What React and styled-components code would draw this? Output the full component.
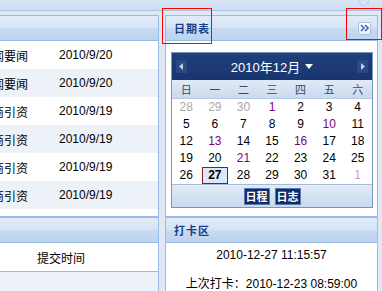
import React from 'react';
import styled, { createGlobalStyle } from 'styled-components';

const GlobalStyle = createGlobalStyle`
  body {
    margin: 0;
    background: #dfe8f6;
    font-family: "Liberation Sans", "Noto Sans CJK SC", sans-serif;
    font-size: 12px;
    color: #000;
  }
`;

const Page = styled.div`
  position: relative;
  width: 382px;
  height: 291px;
  overflow: hidden;
  background: #dfe8f6;
`;

const TopBar = styled.div`
  height: 10px;
  border-bottom: 1px solid #a9c6ea;
  background: linear-gradient(#d9e6f4, #cddef1);
`;

const Knob = styled.div`
  position: absolute;
  left: 358px;
  top: -5px;
  width: 9px;
  height: 9px;
  border-radius: 50%;
  border: 1px solid #b4cbe8;
  background: #d5e3f4;
`;

const Main = styled.div`
  display: flex;
  padding-top: 4px;
`;

const LeftCol = styled.div`
  display: flex;
  flex-direction: column;
  margin-left: -30px;
  width: 189px;
  flex-shrink: 0;
`;

const RightCol = styled.div`
  display: flex;
  flex-direction: column;
  margin-left: 6px;
  width: 213px;
  flex-shrink: 0;
`;

const Panel = styled.div`
  border: 1px solid #99bbe8;
  background: ${p => p.$bg || '#fff'};
  height: ${p => p.$h ? p.$h + 'px' : 'auto'};
  flex-shrink: 0;
`;

const Header = styled.div`
  display: flex;
  align-items: center;
  justify-content: space-between;
  height: 24px;
  padding: 0 6px 0 8px;
  border-bottom: 1px solid #99bbe8;
  background: linear-gradient(#e2ecf8, #d6e4f5 48%, #c9dbf1 52%, #bdd2ee);
`;

const Title = styled.span`
  font-family: "Noto Sans CJK SC", sans-serif;
  font-weight: bold;
  font-size: 11px;
  letter-spacing: 1px;
  color: #15428b;
`;

const ToolBtn = styled.div`
  display: flex;
  align-items: center;
  justify-content: center;
  width: 11px;
  height: 11px;
  border: 1px solid #a9bfdc;
  border-radius: 2px;
  background: linear-gradient(#ffffff, #e6eef8);
`;

const Row = styled.div`
  display: flex;
  align-items: center;
  height: 28px;
  background: ${p => (p.$alt ? '#edf2f8' : '#fff')};
`;

const TitleCell = styled.div`
  width: 79px;
  padding-left: 9px;
  font-family: "Noto Sans CJK SC", sans-serif;
  font-size: 12px;
  white-space: nowrap;
  overflow: hidden;
`;

const DateCell = styled.div`
  font-size: 12px;
`;

const HeadRow = styled.div`
  display: flex;
  align-items: center;
  height: 28px;
  border-bottom: 1px solid #99bbe8;
  background: #fff;
  padding-left: 66px;
  font-family: "Noto Sans CJK SC", sans-serif;
  font-size: 12px;
`;

const CalBody = styled.div`
  padding: 11px 4px 6px 5px;
`;

const Calendar = styled.div`
  border: 1px solid #7394c4;
  background: #fff;
`;

const CalHead = styled.div`
  display: flex;
  align-items: center;
  justify-content: space-between;
  height: 27px;
  padding: 0 4px;
  background: linear-gradient(#213f7c, #193570);
`;

const Arrow = styled.div`
  display: flex;
  align-items: center;
  justify-content: center;
  width: 11px;
  height: 13px;
  background: #2a4985;
`;

const Month = styled.div`
  display: flex;
  align-items: center;
  gap: 5px;
  color: #fff;
  font-family: "Liberation Sans", "Noto Sans CJK SC", sans-serif;
  font-size: 13px;
`;

const Grid = styled.div`
  display: grid;
  grid-template-columns: repeat(7, 1fr);
`;

const WeekRow = styled(Grid)`
  height: 18px;
  align-items: center;
  background: linear-gradient(#e1eaf6, #cbdaee);
  border-bottom: 1px solid #b5c9e6;
`;

const WeekDay = styled.div`
  text-align: center;
  font-family: "Noto Sans CJK SC", sans-serif;
  font-size: 11px;
  color: #3a4a66;
`;

const Day = styled.div`
  height: 17px;
  line-height: 17px;
  text-align: center;
  font-size: 12px;
  color: ${p => p.$color || '#000'};
  font-weight: ${p => (p.$today ? 'bold' : 'normal')};
  ${p =>
    p.$today &&
    `
    box-sizing: border-box;
    margin: 0 1px;
    border: 1px solid #8b1a1a;
    line-height: 15px;
    background: #dde7f5;
  `}
`;

const CalFoot = styled.div`
  display: flex;
  justify-content: center;
  align-items: center;
  gap: 5px;
  height: 22px;
  border-top: 1px solid #a3bbdd;
  background: linear-gradient(#e3ebf6, #c9d9ee);
`;

const FootBtn = styled.div`
  padding: 0 1px;
  height: 15px;
  line-height: 15px;
  background: #0d2c68;
  border: 1px solid #5b7bb0;
  color: #fff;
  font-family: "Noto Sans CJK SC", sans-serif;
  font-weight: bold;
  font-size: 11px;
`;

const ClockBody = styled.div`
  display: flex;
  flex-direction: column;
  align-items: center;
  gap: 15px;
  padding-top: 5px;
  font-size: 12px;
`;

const Line = styled.div`
  height: 14px;
  line-height: 14px;
  white-space: nowrap;
  font-family: "Liberation Sans", "Noto Sans CJK SC", sans-serif;
`;

const Mark = styled.div`
  position: absolute;
  left: ${p => p.$x}px;
  top: ${p => p.$y}px;
  width: ${p => p.$w}px;
  height: ${p => p.$h}px;
  border: 1px solid #ff0000;
`;

const news = [
  ['新闻要闻', '2010/9/20'],
  ['新闻要闻', '2010/9/20'],
  ['招商引资', '2010/9/19'],
  ['招商引资', '2010/9/19'],
  ['招商引资', '2010/9/19'],
  ['招商引资', '2010/9/19'],
];

const purple = '#800080';
const days = [
  [28, '#aaa'], [29, '#aaa'], [30, '#aaa'], [1, purple], [2], [3], [4],
  [5], [6], [7], [8], [9], [10, purple], [11],
  [12], [13, purple], [14], [15], [16, purple], [17], [18],
  [19], [20], [21, purple], [22], [23], [24], [25],
  [26], [27, null, true], [28], [29], [30], [31], [1, '#d49ac4'],
];

export default function App() {
  return (
    <Page>
      <GlobalStyle />
      <TopBar />
      <Knob />
      <Main>
        <LeftCol>
          <Panel $h={200}>
            <Header />
            {news.map(([t, d], i) => (
              <Row key={i} $alt={i % 2 === 1}>
                <TitleCell>{t}</TitleCell>
                <DateCell>{d}</DateCell>
              </Row>
            ))}
          </Panel>
          <Panel $bg="#edf2f8" $h={80}>
            <Header />
            <HeadRow>提交时间</HeadRow>
          </Panel>
        </LeftCol>
        <RightCol>
          <Panel $h={200}>
            <Header>
              <Title>日期表</Title>
              <ToolBtn>
                <svg width="9" height="8" viewBox="0 0 9 8">
                  <path d="M1 1l3 3-3 3M5 1l3 3-3 3" fill="none" stroke="#3d6db3" strokeWidth="1.6" />
                </svg>
              </ToolBtn>
            </Header>
            <CalBody>
              <Calendar>
                <CalHead>
                  <Arrow>
                    <svg width="5" height="7" viewBox="0 0 5 7"><path d="M4 0v7L0 3.5z" fill="#c3cede" /></svg>
                  </Arrow>
                  <Month>
                    2010年12月
                    <svg width="8" height="5" viewBox="0 0 8 5"><path d="M0 0h8L4 5z" fill="#fff" /></svg>
                  </Month>
                  <Arrow>
                    <svg width="5" height="7" viewBox="0 0 5 7"><path d="M1 0v7l4-3.5z" fill="#c3cede" /></svg>
                  </Arrow>
                </CalHead>
                <WeekRow>
                  {['日', '一', '二', '三', '四', '五', '六'].map(w => (
                    <WeekDay key={w}>{w}</WeekDay>
                  ))}
                </WeekRow>
                <Grid>
                  {days.map(([n, c, today], i) => (
                    <Day key={i} $color={c} $today={today}>{n}</Day>
                  ))}
                </Grid>
                <CalFoot>
                  <FootBtn>日程</FootBtn>
                  <FootBtn>日志</FootBtn>
                </CalFoot>
              </Calendar>
            </CalBody>
          </Panel>
          <Panel $h={80}>
            <Header>
              <Title>打卡区</Title>
            </Header>
            <ClockBody>
              <Line>2010-12-27 11:15:57</Line>
              <Line>上次打卡：2010-12-23 08:59:00</Line>
            </ClockBody>
          </Panel>
        </RightCol>
      </Main>
      <Mark $x={162} $y={8} $w={48} $h={34} />
      <Mark $x={346} $y={8} $w={34} $h={30} />
    </Page>
  );
}
